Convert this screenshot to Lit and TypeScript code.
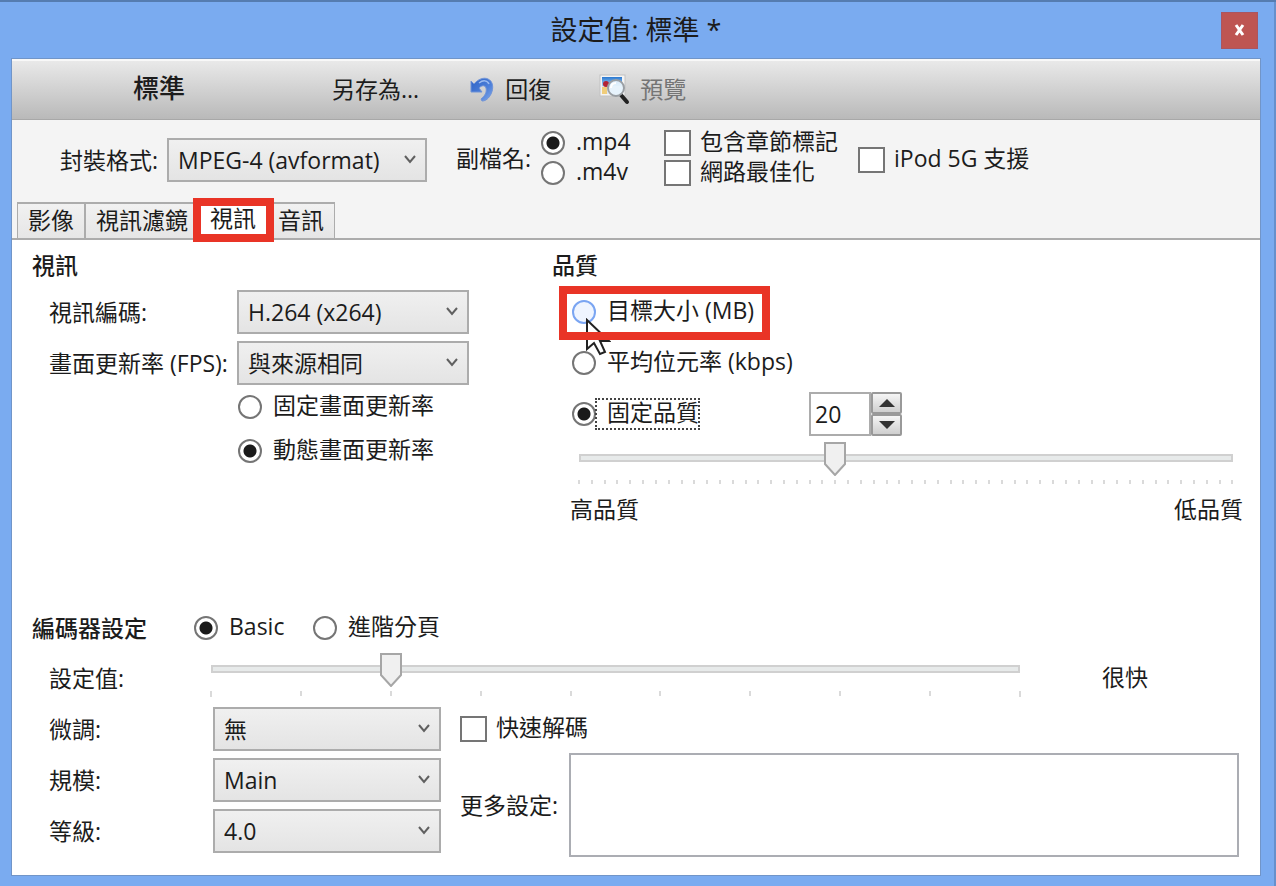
import { LitElement, html, css, svg } from "lit";
import { customElement, property } from "lit/decorators.js";

const base = css`
  :host {
    font-family: "Open Sans", "Noto Sans CJK TC", sans-serif;
    font-size: 23px;
    line-height: 30px;
    color: #1c1c1c;
  }
  * {
    box-sizing: border-box;
  }
  button,
  input,
  select,
  textarea {
    font: inherit;
    color: inherit;
    margin: 0;
  }
`;

@customElement("pick-option")
class PickOption extends LitElement {
  @property() type = "radio";
  @property() name = "";
  @property() label = "";
  @property({ type: Boolean }) checked = false;
  @property({ type: Boolean }) hot = false;
  @property({ type: Boolean }) focusring = false;

  static styles = [
    base,
    css`
      :host {
        display: block;
      }
      .option {
        display: flex;
        align-items: center;
        white-space: nowrap;
      }
      .box {
        appearance: none;
        flex: none;
        background: #fff;
        border: 2px solid #757575;
      }
      .radio {
        width: 24px;
        height: 24px;
        border-radius: 50%;
      }
      .radio:checked {
        background: radial-gradient(circle, #1a1a1a 6px, #fff 7px);
      }
      .checkbox {
        width: 27px;
        height: 26px;
      }
      .checkbox:checked {
        background: linear-gradient(#1a1a1a, #1a1a1a) center / 13px 13px no-repeat;
      }
      .hot {
        border-color: #7aa5f2;
        background: #eff5ff;
      }
      .text {
        padding: 0 0 4px 11px;
        line-height: 26px;
      }
      .checkbox + .text {
        padding-left: 9px;
      }
      .ring {
        outline: 2px dotted #444;
        outline-offset: -1px;
      }
    `,
  ];

  render() {
    return html`<label class="option">
      <input
        class="box ${this.type} ${this.hot ? "hot" : ""}"
        type=${this.type}
        name=${this.name}
        .checked=${this.checked}
      />
      <span class="text ${this.focusring ? "ring" : ""}">${this.label}</span>
    </label>`;
  }
}

@customElement("tick-slider")
class TickSlider extends LitElement {
  @property({ type: Number }) max = 10;
  @property({ type: Number }) value = 0;
  @property() label = "";
  @property({ type: Boolean }) tall = false;

  static styles = [
    base,
    css`
      :host {
        display: block;
      }
      .range {
        appearance: none;
        display: block;
        width: 100%;
        height: 34px;
        background: none;
      }
      .range::-webkit-slider-runnable-track {
        height: 34px;
        background:
          linear-gradient(#e7eaea, #e7eaea) center 14px / calc(100% - 26px) 4px no-repeat,
          linear-gradient(#d0d0d0, #d0d0d0) center 12px / calc(100% - 22px) 8px no-repeat;
      }
      .range::-webkit-slider-thumb {
        appearance: none;
        width: 22px;
        height: 34px;
        background: url("data:image/svg+xml,%3Csvg xmlns='http://www.w3.org/2000/svg' width='22' height='34'%3E%3Cpath d='M1 1H21V22L11 33L1 22Z' fill='%23f0f0f0' stroke='%23a6a6a6' stroke-width='2'/%3E%3C/svg%3E")
          no-repeat;
      }
      .ticks {
        display: flex;
        justify-content: space-between;
        height: 6px;
        margin: 4px 10px 0;
      }
      .tick {
        width: 2px;
        height: 4px;
        background: #dadada;
      }
      .tall .tick {
        height: 5px;
      }
      .tall .tick:first-child,
      .tall .tick:last-child {
        height: 6px;
      }
    `,
  ];

  render() {
    return html`<input
        class="range"
        type="range"
        min="0"
        max=${this.max}
        .value=${String(this.value)}
        aria-label=${this.label}
      />
      <div class="ticks ${this.tall ? "tall" : ""}">
        ${Array.from({ length: this.max + 1 }, () => html`<i class="tick"></i>`)}
      </div>`;
  }
}

const undoIcon = svg`
  <defs>
    <linearGradient id="u" x1="0" y1="0" x2="1" y2="1">
      <stop offset="0" stop-color="#2f63c4"/><stop offset="0.6" stop-color="#4d80da"/><stop offset="1" stop-color="#86abea"/>
    </linearGradient>
  </defs>
  <path d="M1 5L4 8C8 3 14 1 18 3C23 5 24 12 21 18C19 22 16 25 12 25L11 23C15 20 17 16 16 12C15 9 12 9 9 12L12 16L1 16Z" fill="url(#u)" stroke="#6f93d8" stroke-width="1"/>
  <path d="M9 7C13 4 17 4 19 8" fill="none" stroke="#9dbcf0" stroke-width="1.5"/>`;

const previewIcon = svg`
  <defs>
    <linearGradient id="s" x1="0" y1="0" x2="0" y2="1">
      <stop offset="0" stop-color="#2a78d0"/><stop offset="1" stop-color="#a9d5f5"/>
    </linearGradient>
  </defs>
  <rect x="1" y="1" width="25" height="21" fill="#f4f4f4" stroke="#c2c2c2"/>
  <rect x="3" y="3" width="20" height="9" fill="url(#s)"/>
  <rect x="3" y="12" width="20" height="8" fill="#dfe7ee"/>
  <rect x="3" y="13" width="5" height="7" fill="#f0cd7a"/>
  <circle cx="7" cy="10" r="3" fill="#b32334"/>
  <path d="M22 21L28 28" stroke="#222" stroke-width="4" stroke-linecap="round"/>
  <circle cx="17" cy="14" r="8" fill="#e8f4fd" fill-opacity="0.9" stroke="#9a9fa4" stroke-width="2"/>
  <path d="M12 14C12 11 14 9 17 9" fill="none" stroke="#fff" stroke-width="2"/>`;

@customElement("app-root")
class AppRoot extends LitElement {
  static styles = [
    base,
    css`
      :host {
        display: block;
      }
      .window {
        display: flex;
        flex-direction: column;
        min-height: 100vh;
        padding: 0 16px 11px 12px;
        background: #7aabf0;
        border-top: 2px solid #557cb0;
        box-shadow: inset -2px 0 #6690cc;
      }
      .titlebar {
        display: grid;
        grid-template-columns: 1fr auto 1fr;
        align-items: center;
        height: 57px;
      }
      .title {
        grid-column: 2;
        margin: 0;
        padding-bottom: 2px;
        font-size: 27px;
        font-weight: 400;
      }
      .close {
        justify-self: end;
        width: 37px;
        height: 37px;
        margin-right: 2px;
        padding: 0;
        border: 1px solid #aa5560;
        background: #be5552;
      }
      .close svg,
      .tool svg {
        display: block;
      }
      .body {
        display: flex;
        flex-direction: column;
        flex: 1;
        background: #f4f4f4;
        box-shadow: 0 0 0 1px #7195c8;
      }
      .toolbar {
        display: flex;
        align-items: center;
        height: 61px;
        gap: 48px;
        padding-bottom: 2px;
        background: linear-gradient(#e9e9e9, #b9b9b9);
        border-top: 2px solid #f8f8f8;
        border-bottom: 1px solid #a8a8a8;
      }
      .preset {
        width: 272px;
        padding: 0 0 2px 22px;
        text-align: center;
        font-size: 26px;
        font-weight: 500;
      }
      .tool {
        display: flex;
        align-items: center;
        gap: 10px;
        padding: 0;
        border: 0;
        background: none;
      }
      .tool:disabled {
        color: #757575;
      }
      .format {
        display: flex;
        align-items: center;
        height: 80px;
        padding-left: 48px;
        white-space: nowrap;
      }
      .format-label {
        width: 107px;
      }
      .ext-label {
        width: 85px;
        margin-left: 29px;
        padding-bottom: 4px;
      }
      .stack {
        width: 123px;
        padding-bottom: 4px;
      }
      .checks {
        width: 194px;
        padding-bottom: 4px;
      }
      .select {
        appearance: none;
        height: 44px;
        padding: 0 40px 1px 9px;
        border: 2px solid #acacac;
        border-radius: 0;
        background:
          url("data:image/svg+xml,%3Csvg xmlns='http://www.w3.org/2000/svg' width='14' height='10'%3E%3Cpath d='M2 1L7 7L12 1' fill='none' stroke='%23606060' stroke-width='2'/%3E%3C/svg%3E")
            no-repeat right 8px center,
          linear-gradient(#f0f0f0, #e4e4e4);
      }
      .w-format {
        width: 260px;
      }
      .w-video {
        width: 232px;
      }
      .w-encoder {
        width: 228px;
      }
      .tabs {
        display: flex;
        align-items: flex-end;
        height: 38px;
        padding-left: 5px;
      }
      .tab {
        height: 36px;
        padding: 0 10px 2px;
        border: 2px solid #acacac;
        border-width: 2px 1px 0;
        background: linear-gradient(#f1f1f1, #e6e6e6);
      }
      .tab.selected {
        position: relative;
        z-index: 1;
        height: 38px;
        padding-bottom: 5px;
        background: #fff;
      }
      .mark::after {
        content: "";
        position: absolute;
        z-index: 2;
        border: 8px solid #e93426;
        pointer-events: none;
      }
      .tab.mark::after {
        inset: -4px -8px -4px -7px;
      }
      .panel {
        display: flex;
        flex-direction: column;
        flex: 1;
        padding: 10px 16px 18px 20px;
        background: #fff;
        border-top: 2px solid #acacac;
      }
      .top {
        display: grid;
        grid-template-columns: 520px 1fr;
      }
      .heading {
        margin: 0 0 10px;
        font-size: 23px;
        line-height: 30px;
        font-weight: 500;
      }
      .fields {
        display: grid;
        grid-auto-rows: 44px;
        align-items: center;
        row-gap: 7px;
      }
      .fields-video {
        grid-template-columns: 188px auto;
        justify-content: start;
        padding-left: 17px;
        white-space: nowrap;
      }
      .fields-encoder {
        grid-template-columns: 164px auto;
        margin-right: 19px;
      }
      .rates {
        padding-left: 206px;
      }
      .rate {
        display: flex;
        align-items: center;
        height: 44px;
        padding-bottom: 1px;
      }
      .quality {
        padding-left: 20px;
      }
      .target {
        position: relative;
        justify-self: start;
      }
      .target.mark::after {
        inset: -11px -16px -13px -13px;
      }
      .cursor {
        position: absolute;
        z-index: 1;
        left: 13px;
        top: 21px;
      }
      .constant {
        display: grid;
        grid-template-columns: 237px auto;
        justify-content: start;
        align-items: center;
      }
      .constant pick-option {
        justify-self: start;
      }
      .spinner {
        display: flex;
        height: 44px;
      }
      .number {
        appearance: textfield;
        width: 62px;
        padding: 0 4px;
        border: 2px solid #acacac;
        border-radius: 0;
        background: #fff;
      }
      .number::-webkit-inner-spin-button {
        appearance: none;
      }
      .steps {
        display: grid;
        width: 31px;
      }
      .step {
        display: grid;
        place-items: center;
        padding: 0;
        border: 2px solid #999;
        border-radius: 2px;
        background: linear-gradient(#f5f5f5, #cfcfcf);
      }
      .slider-box {
        padding: 6px 0 8px 16px;
      }
      .ends {
        display: flex;
        justify-content: space-between;
        padding: 0 1px 0 18px;
      }
      .encoder {
        margin-top: auto;
      }
      .mode {
        display: flex;
        align-items: center;
        margin-bottom: 13px;
      }
      .mode .heading {
        width: 162px;
        margin: 0;
      }
      .basic {
        width: 119px;
      }
      .speed {
        display: flex;
        align-items: center;
        height: 44px;
        padding-left: 17px;
        margin-bottom: 7px;
      }
      .speed-label {
        width: 151px;
      }
      .speed tick-slider {
        flex: 1;
        padding-bottom: 6px;
      }
      .speed-value {
        width: 142px;
        margin-left: 71px;
        padding-bottom: 2px;
      }
      .details {
        display: flex;
        align-items: flex-start;
        padding-left: 17px;
      }
      .extra {
        display: grid;
        grid-template-columns: 109px 1fr;
        grid-template-rows: 44px 104px;
        row-gap: 2px;
        align-items: center;
        flex: 1;
        padding-right: 5px;
      }
      .fast {
        grid-column: 1 / 3;
      }
      .more {
        display: block;
        width: 100%;
        height: 104px;
        padding: 6px;
        border: 2px solid #abadb3;
        border-radius: 0;
        background: #fff;
        resize: none;
      }
    `,
  ];

  render() {
    return html`
      <main class="window">
        <header class="titlebar">
          <h1 class="title">設定值: 標準 *</h1>
          <button class="close" aria-label="關閉">
            <svg width="35" height="35" viewBox="0 0 35 35">
              <path d="M14 12L21 22M21 12L14 22" stroke="#fff" stroke-width="3" />
            </svg>
          </button>
        </header>
        <div class="body">
          <div class="toolbar">
            <span class="preset">標準</span>
            <button class="tool">另存為...</button>
            <button class="tool">
              <svg width="28" height="26" viewBox="-3 0 28 26">${undoIcon}</svg>回復
            </button>
            <button class="tool" disabled>
              <svg width="31" height="31" viewBox="0 0 31 31">${previewIcon}</svg>預覽
            </button>
          </div>

          <div class="format">
            <label class="format-label" for="container">封裝格式:</label>
            <select class="select w-format" id="container">
              <option>MPEG-4 (avformat)</option>
            </select>
            <span class="ext-label">副檔名:</span>
            <div class="stack">
              <pick-option name="ext" label=".mp4" checked></pick-option>
              <pick-option name="ext" label=".m4v"></pick-option>
            </div>
            <div class="checks">
              <pick-option type="checkbox" label="包含章節標記"></pick-option>
              <pick-option type="checkbox" label="網路最佳化"></pick-option>
            </div>
            <pick-option type="checkbox" label="iPod 5G 支援"></pick-option>
          </div>

          <nav class="tabs" role="tablist">
            <button class="tab" role="tab">影像</button>
            <button class="tab" role="tab">視訊濾鏡</button>
            <button class="tab selected mark" role="tab" aria-selected="true">視訊</button>
            <button class="tab" role="tab">音訊</button>
          </nav>

          <div class="panel">
            <div class="top">
              <section>
                <h2 class="heading">視訊</h2>
                <div class="fields fields-video">
                  <label for="codec">視訊編碼:</label>
                  <select class="select w-video" id="codec">
                    <option>H.264 (x264)</option>
                  </select>
                  <label for="fps">畫面更新率 (FPS):</label>
                  <select class="select w-video" id="fps">
                    <option>與來源相同</option>
                  </select>
                </div>
                <div class="rates">
                  <div class="rate"><pick-option name="rate" label="固定畫面更新率"></pick-option></div>
                  <div class="rate"><pick-option name="rate" label="動態畫面更新率" checked></pick-option></div>
                </div>
              </section>

              <section>
                <h2 class="heading">品質</h2>
                <div class="fields quality">
                  <div class="target mark">
                    <pick-option name="quality" label="目標大小 (MB)" hot></pick-option>
                    <svg class="cursor" width="26" height="38" viewBox="0 0 26 38">
                      <path
                        d="M2 2V31L9 25L15 36L20 34L15 23H24Z"
                        fill="#fff"
                        stroke="#222"
                        stroke-width="2"
                      />
                    </svg>
                  </div>
                  <pick-option name="quality" label="平均位元率 (kbps)"></pick-option>
                  <div class="constant">
                    <pick-option name="quality" label="固定品質" checked focusring></pick-option>
                    <div class="spinner">
                      <input class="number" type="number" value="20" aria-label="固定品質" />
                      <div class="steps">
                        <button class="step" aria-label="增加">
                          <svg width="16" height="8"><path d="M0 8L8 0L16 8Z" fill="#333" /></svg>
                        </button>
                        <button class="step" aria-label="減少">
                          <svg width="16" height="8"><path d="M0 0L8 8L16 0Z" fill="#333" /></svg>
                        </button>
                      </div>
                    </div>
                  </div>
                </div>
                <div class="slider-box">
                  <tick-slider max="51" value="20" label="品質"></tick-slider>
                </div>
                <div class="ends"><span>高品質</span><span>低品質</span></div>
              </section>
            </div>

            <section class="encoder">
              <div class="mode">
                <h2 class="heading">編碼器設定</h2>
                <pick-option class="basic" name="mode" label="Basic" checked></pick-option>
                <pick-option name="mode" label="進階分頁"></pick-option>
              </div>
              <div class="speed">
                <span class="speed-label">設定值:</span>
                <tick-slider max="9" value="2" label="設定值" tall></tick-slider>
                <span class="speed-value">很快</span>
              </div>
              <div class="details">
                <div class="fields fields-encoder">
                  <label for="tune">微調:</label>
                  <select class="select w-encoder" id="tune">
                    <option>無</option>
                  </select>
                  <label for="profile">規模:</label>
                  <select class="select w-encoder" id="profile">
                    <option>Main</option>
                  </select>
                  <label for="level">等級:</label>
                  <select class="select w-encoder" id="level">
                    <option>4.0</option>
                  </select>
                </div>
                <div class="extra">
                  <pick-option class="fast" type="checkbox" label="快速解碼"></pick-option>
                  <label for="more">更多設定:</label>
                  <textarea class="more" id="more"></textarea>
                </div>
              </div>
            </section>
          </div>
        </div>
      </main>
    `;
  }
}
